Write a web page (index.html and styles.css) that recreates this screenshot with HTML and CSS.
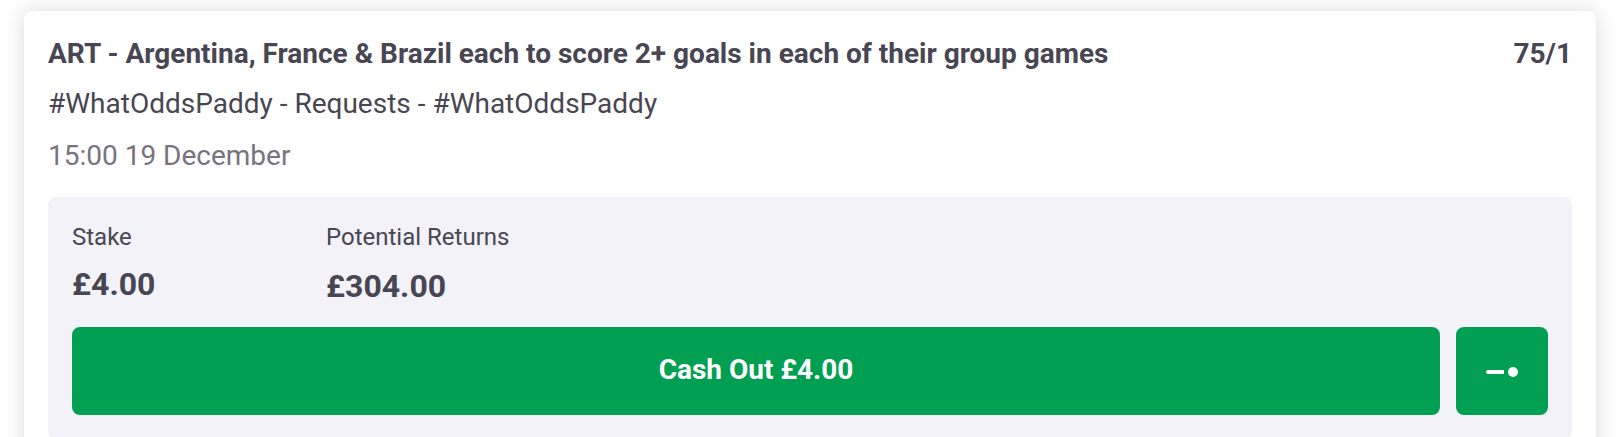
FILE: index.html
```html
<!DOCTYPE html>
<html lang="en">
<head>
    <meta charset="UTF-8">
    <meta name="viewport" content="width=device-width, initial-scale=1.0">
    <title>My Bets</title>
    <link rel="stylesheet" href="styles.css">
</head>
<body>
    <div class="bet-card">
        <div class="bet-header">
            <h1 class="selection">ART - Argentina, France &amp; Brazil each to score 2+ goals in each of their group games</h1>
            <span class="odds">75/1</span>
        </div>
        <p class="market">#WhatOddsPaddy - Requests - #WhatOddsPaddy</p>
        <p class="event-time">15:00 19 December</p>

        <div class="bet-summary">
            <div class="amounts">
                <div class="amount stake">
                    <span class="amount-label">Stake</span>
                    <strong class="amount-value">£4.00</strong>
                </div>
                <div class="amount returns">
                    <span class="amount-label">Potential Returns</span>
                    <strong class="amount-value">£304.00</strong>
                </div>
            </div>
            <div class="actions">
                <button class="button cash-out">Cash Out £4.00</button>
                <button class="button partial" aria-label="Partial cash out">
                    <svg class="slider-icon" width="32" height="10" viewBox="0 0 32 10">
                        <path d="M2 3H18V7H2A2 2 0 0 1 2 3Z" fill="#fff"/>
                        <circle cx="27" cy="5" r="5" fill="#fff"/>
                    </svg>
                </button>
            </div>
        </div>
    </div>
</body>
</html>
```
FILE: styles.css
```css
* {
    box-sizing: border-box;
}
body {
    margin: 0;
    padding: 11px 24px 0;
    height: 437px;
    overflow: hidden;
    background: #fff;
    color: #494653;
    font-family: Roboto, sans-serif;
}
.bet-card {
    padding: 25px 24px 24px;
    background: #fff;
    border-radius: 8px;
    box-shadow: 0 0 20px rgba(0, 0, 0, 0.15);
}
.bet-header {
    display: flex;
    justify-content: space-between;
    line-height: 36px;
    font-size: 28px;
    font-weight: 700;
}
.selection {
    margin: 0;
    font-size: inherit;
    font-weight: inherit;
}
.market,
.event-time {
    margin: 14px 0 0;
    font-size: 28px;
    line-height: 36px;
}
.event-time {
    margin-top: 16px;
    color: #77747f;
}
.bet-summary {
    margin-top: 23px;
    padding: 24px;
    background: #f3f2f8;
    border-radius: 8px;
}
.amounts {
    display: flex;
}
.amount {
    display: flex;
    flex-direction: column;
}
.stake {
    width: 254px;
}
.amount-label {
    font-size: 24px;
    line-height: 32px;
}
.amount-value {
    margin-top: 12px;
    font-size: 32px;
    line-height: 38px;
}
.returns .amount-value {
    margin-top: 14px;
}
.actions {
    display: flex;
    gap: 16px;
    margin-top: 22px;
}
.button {
    height: 88px;
    padding: 0;
    border: none;
    border-radius: 8px;
    background: #009f51;
    color: #fff;
    font-family: inherit;
    font-size: 28px;
    font-weight: 700;
    cursor: pointer;
}
.cash-out {
    flex: 1;
    padding-bottom: 4px;
}
.partial {
    display: flex;
    align-items: center;
    justify-content: center;
    width: 92px;
    padding-top: 2px;
}
```
